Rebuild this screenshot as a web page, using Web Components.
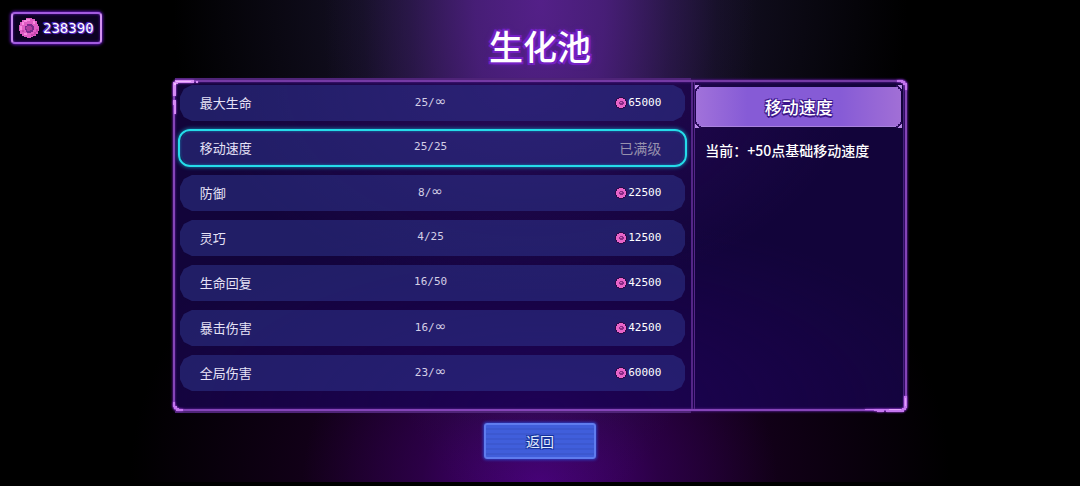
<!DOCTYPE html>
<html lang="zh-CN">
<head>
    <meta charset="UTF-8">
    <meta name="viewport" content="width=device-width, initial-scale=1.0">
    <title>生化池</title>
    <style>
        body {
            margin: 0;
            background: #000;
            color: #fff;
            font-family: "Noto Sans CJK SC", sans-serif;
        }
    </style>
</head>
<body>
    <bio-pool>
        <coin-badge slot="coins">238390</coin-badge>
        <span slot="title">生化池</span>
        <upgrade-row slot="rows" name="最大生命" level="25/∞" price="65000"></upgrade-row>
        <upgrade-row slot="rows" name="移动速度" level="25/25" selected></upgrade-row>
        <upgrade-row slot="rows" name="防御" level="8/∞" price="22500"></upgrade-row>
        <upgrade-row slot="rows" name="灵巧" level="4/25" price="12500"></upgrade-row>
        <upgrade-row slot="rows" name="生命回复" level="16/50" price="42500"></upgrade-row>
        <upgrade-row slot="rows" name="暴击伤害" level="16/∞" price="42500"></upgrade-row>
        <upgrade-row slot="rows" name="全局伤害" level="23/∞" price="60000"></upgrade-row>
        <upgrade-detail slot="detail">
            <span slot="title">移动速度</span>
            当前：+50点基础移动速度
        </upgrade-detail>
        <back-button slot="action">返回</back-button>
    </bio-pool>

    <script>
        // Shared helper: attach an open root and fill it from a template
        function attach(element, html) {
            const template = document.createElement('template');
            template.innerHTML = html;
            element.attachShadow({ mode: 'open' }).appendChild(template.content.cloneNode(true));
        }

        class CoinIcon extends HTMLElement {
            constructor() {
                super();
                attach(this, `
                    <style>
                        :host { display: block; width: 20px; height: 20px; }
                        svg { display: block; width: 100%; height: 100%; }
                        .small, :host([small]) .large { display: none; }
                        :host([small]) .small { display: block; }
                        :host([small]) { width: 12px; height: 12px; }
                    </style>
                    <svg class="large" viewBox="0 0 20 20" aria-hidden="true">
                        <path fill="#e05cc4" d="M7 0h6v1h3v2h2v3h1v2h1v5h-1v3h-2v2h-3v1h-2v1H8v-1H5v-1H3v-2H1v-3H0V7h1V4h2V2h4z"/>
                        <path fill="#f88ade" d="M7 1h4v2H8v1H5v3H3v5H1V8h2V4h2V2h2zM14 3h2v3h-2zM5 15h3v2H5z"/>
                        <path fill="#c845ad" d="M12 16h3v-2h2v-3h2v3h-2v3h-3v1h-2zM3 12h2v2H3z"/>
                        <path fill="#7c2a8c" d="M8 6h5v1h1v1h1v4h-1v2h-2v1H8v-1H7v-2H6V8h2z"/>
                        <path fill="#b13c9f" d="M8 8h4v1h1v3h-2v1H8v-2H7V9h1z"/>
                    </svg>
                    <svg class="small" viewBox="0 0 12 12" aria-hidden="true">
                        <path fill="#2b0a48" d="M4 0h4v1h2v1h1v2h1v4h-1v2h-1v1H8v1H4v-1H2v-1H1V8H0V4h1V2h1V1h2z"/>
                        <path fill="#e764c8" d="M4 1h4v1h2v2h1v4h-1v2H8v1H4v-1H2V8H1V4h1V2h2z"/>
                        <path fill="#8a2a86" d="M5 4h3v1h1v2H8v1H5V7H4V5h1z"/>
                        <path fill="#d060bd" d="M5 5h2v1H5z"/>
                    </svg>
                `);
            }
        }

        class CoinBadge extends HTMLElement {
            constructor() {
                super();
                attach(this, `
                    <style>
                        :host {
                            display: inline-flex;
                            align-items: center;
                            gap: 4px;
                            box-sizing: border-box;
                            height: 32px;
                            padding: 0 6px;
                            border: 2px solid #a35be0;
                            border-left-color: #c98aee;
                            border-right-color: #d292f0;
                            border-radius: 4px;
                            background: #0c0222;
                            box-shadow: 0 0 3px 1px #5c12b0, inset 0 0 3px #5c12b0;
                            font: 14px/20px "DejaVu Sans Mono", monospace;
                            text-shadow: 1px 1px #5d2fd0, -1px -1px #5d2fd0, 0 0 3px #5d2fd0;
                        }
                    </style>
                    <coin-icon></coin-icon>
                    <span><slot></slot></span>
                `);
            }
        }

        class UpgradeRow extends HTMLElement {
            constructor() {
                super();
                attach(this, `
                    <style>
                        :host { display: block; position: relative; }
                        button {
                            display: grid;
                            grid-template-columns: 1fr auto 1fr;
                            align-items: center;
                            width: 100%;
                            height: 36px;
                            padding: 0 24px 0 20px;
                            border: 0;
                            background: rgba(47, 55, 145, .5);
                            clip-path: polygon(0 12px, 4px 4px, 12px 0, calc(100% - 12px) 0, calc(100% - 4px) 4px, 100% 12px, 100% calc(100% - 12px), calc(100% - 4px) calc(100% - 4px), calc(100% - 12px) 100%, 12px 100%, 4px calc(100% - 4px), 0 calc(100% - 12px));
                            color: #e6e2f6;
                            font: 13px/20px "Noto Sans CJK SC", sans-serif;
                            text-align: left;
                            cursor: pointer;
                        }
                        :host([selected])::after {
                            content: "";
                            position: absolute;
                            inset: -1px -2px;
                            border: 2px solid #25dcea;
                            border-radius: 12px;
                            box-shadow: 0 0 4px #148fb8, inset 0 0 3px #147ba8;
                            pointer-events: none;
                        }
                        .level {
                            padding-bottom: 2px;
                            color: #d4cfe6;
                            font: 11px/16px "DejaVu Sans Mono", monospace;
                        }
                        .endless { font: 14px/16px "DejaVu Sans", sans-serif; }
                        .price {
                            display: flex;
                            align-items: center;
                            justify-content: flex-end;
                            gap: 1px;
                            font: 11px/16px "DejaVu Sans Mono", monospace;
                            color: #fff;
                        }
                        .full {
                            color: #9791ad;
                            font: 14px/20px "Noto Sans CJK SC", sans-serif;
                        }
                    </style>
                    <button type="button">
                        <span class="name"></span>
                        <span class="level"></span>
                        <span class="price"></span>
                    </button>
                `);
            }

            static get observedAttributes() {
                return ['name', 'level', 'price', 'selected'];
            }

            attributeChangedCallback() {
                this.render();
            }

            connectedCallback() {
                this.render();
            }

            // A row without a price has reached its top level
            render() {
                const level = this.getAttribute('level') || '';
                const price = this.getAttribute('price');
                this.shadowRoot.querySelector('.name').textContent = this.getAttribute('name');
                this.shadowRoot.querySelector('.level').innerHTML = level.replace('∞', '<span class="endless">∞</span>');
                this.shadowRoot.querySelector('button').setAttribute('aria-pressed', this.hasAttribute('selected'));
                this.shadowRoot.querySelector('.price').innerHTML = price
                    ? `<coin-icon small></coin-icon><span>${price}</span>`
                    : '<span class="full">已满级</span>';
            }
        }

        class UpgradeDetail extends HTMLElement {
            constructor() {
                super();
                attach(this, `
                    <style>
                        :host { display: block; font-size: 14px; line-height: 20px; }
                        h2 {
                            position: relative;
                            margin: 0;
                            padding: 8px 0;
                            background: linear-gradient(90deg, #a172da, #865bd6 25%, #865bd6 70%, #a16fd6);
                            border-bottom: 1px solid #a982df;
                            font-size: 17px;
                            font-weight: 500;
                            line-height: 23px;
                            text-align: center;
                            text-shadow: 1px 1px #3b168b, -1px -1px #3b168b, 1px -1px #3b168b, -1px 1px #3b168b, 0 2px #3b168b;
                        }
                        svg { position: absolute; width: 6px; height: 6px; }
                        .tl { top: -2px; left: -1px; }
                        .tr { top: -2px; right: -1px; transform: scaleX(-1); }
                        .bl { bottom: -2px; left: -1px; transform: scaleY(-1); }
                        .br { bottom: -2px; right: -1px; transform: scale(-1); }
                        p { margin: 0; padding: 13px 9px; font-weight: 500; }
                    </style>
                    <h2>
                        <slot name="title"></slot>
                        ${['tl', 'tr', 'bl', 'br'].map(corner => `
                        <svg class="${corner}" viewBox="0 0 6 6" shape-rendering="crispEdges" aria-hidden="true">
                            <path fill="#2a0c5c" d="M0 0h6v2H4v2H2v2H0z"/>
                            <path fill="#b88be8" d="M0 0h4v1H3v1H2v1H1v1H0z"/>
                        </svg>`).join('')}
                    </h2>
                    <p><slot></slot></p>
                `);
            }
        }

        class BackButton extends HTMLElement {
            constructor() {
                super();
                attach(this, `
                    <style>
                        :host { display: block; }
                        button {
                            display: block;
                            width: 112px;
                            height: 36px;
                            padding: 0;
                            border: 2px solid #5f7cee;
                            border-radius: 3px;
                            background: repeating-linear-gradient(#405edb 0 3px, #3c58d0 3px 5px);
                            box-shadow: 0 0 3px 1px #2b3fc0;
                            color: #e2ecff;
                            font: 14px/20px "Noto Sans CJK SC", sans-serif;
                            text-shadow: 1px 1px #16339c, -1px -1px #16339c, 1px -1px #16339c, -1px 1px #16339c;
                            cursor: pointer;
                        }
                    </style>
                    <button type="button"><slot></slot></button>
                `);
            }
        }

        class BioPool extends HTMLElement {
            constructor() {
                super();
                attach(this, `
                    <style>
                        :host {
                            display: flex;
                            flex-direction: column;
                            box-sizing: border-box;
                            min-height: 100vh;
                            border-bottom: 4px solid #000;
                            background:
                                radial-gradient(ellipse 20% 110% at 50% 0, rgba(86, 32, 140, .95), rgba(78, 31, 130, .85) 30%, rgba(60, 28, 104, .5) 60%, rgba(44, 24, 78, .2) 82%, transparent),
                                radial-gradient(ellipse 34% 90% at 50% 0, rgba(40, 30, 68, .9), rgba(30, 24, 54, .6) 50%, transparent),
                                radial-gradient(ellipse 22% 42% at 50% 100%, rgba(76, 0, 130, .9), rgba(60, 0, 104, .45) 50%, transparent),
                                radial-gradient(ellipse 38% 70% at 50% 100%, rgba(48, 0, 72, .85), rgba(34, 0, 46, .6) 50%, transparent),
                                #000;
                        }
                        header {
                            display: grid;
                            grid-template-columns: 1fr auto 1fr;
                            align-items: start;
                            height: 80px;
                            padding: 0 11px;
                        }
                        .coins { padding-top: 12px; }
                        h1 {
                            margin: 0;
                            padding-top: 22px;
                            font-size: 34px;
                            font-weight: 500;
                            line-height: 48px;
                            text-shadow: 2px 2px #7420c4, -2px 2px #7420c4, 2px -2px #7420c4, -2px -2px #7420c4, 0 0 6px #7d22d0;
                        }
                        main {
                            position: relative;
                            display: grid;
                            grid-template-columns: 71fr 29fr;
                            box-sizing: border-box;
                            width: 68%;
                            margin: 0 auto;
                            border: 2px solid #8544b8;
                            border-top-color: #753aa5;
                            border-radius: 5px;
                            box-shadow: 0 0 2px 1px #42136f, inset 0 0 2px 1px #3c1270;
                            background:
                                radial-gradient(ellipse 45% 65% at 48% 0, rgba(65, 15, 125, .45), transparent),
                                radial-gradient(ellipse 60% 60% at 50% 100%, rgba(42, 0, 112, .5), transparent),
                                #12043a;
                        }
                        .list {
                            position: relative;
                            display: flex;
                            flex-direction: column;
                            gap: 9px;
                            padding: 3px 6px 18px 5px;
                            border-right: 2px solid #542687;
                        }
                        /* dim outer line above and below the list */
                        .list::before {
                            content: "";
                            position: absolute;
                            inset: -4px 0;
                            border: solid #4f2478;
                            border-width: 2px 0;
                            pointer-events: none;
                        }
                        .detail {
                            margin: 0 1px;
                            padding: 5px 2px 0 1px;
                            border-right: 1px solid #46217c;
                            border-left: 1px solid #542687;
                        }
                        .corner { position: absolute; filter: drop-shadow(0 0 1px #a742e0); }
                        .nw { top: -3px; left: -3px; }
                        .ne { top: -2px; right: -2px; }
                        .sw { bottom: -2px; left: -2px; }
                        .se { bottom: -4px; right: -2px; }
                        footer { display: flex; justify-content: center; padding: 12px 0 20px; }
                    </style>
                    <header>
                        <div class="coins"><slot name="coins"></slot></div>
                        <h1><slot name="title"></slot></h1>
                    </header>
                    <main>
                        <div class="list"><slot name="rows"></slot></div>
                        <div class="detail"><slot name="detail"></slot></div>
                        <svg class="corner nw" width="28" height="36" shape-rendering="crispEdges" aria-hidden="true">
                            <path fill="#d78bf5" d="M3 1h19v3H6v1H4v12H1V3h2zM24 2h2v2h-2zM1 21h3v14H2v-9H1z"/>
                            <path fill="#f0b8ff" d="M4 2h15v1H4v3H2V4h2z"/>
                        </svg>
                        <svg class="corner ne" width="10" height="10" shape-rendering="crispEdges" aria-hidden="true">
                            <path fill="#c476ee" d="M0 0h6v1h2v2h2v7H8V5H6V3H4V2H0z"/>
                        </svg>
                        <svg class="corner sw" width="10" height="10" shape-rendering="crispEdges" aria-hidden="true">
                            <path fill="#c476ee" d="M0 1h2v4h2v2h2v1h4v2H3V8H1V6H0z"/>
                        </svg>
                        <svg class="corner se" width="46" height="18" shape-rendering="crispEdges" aria-hidden="true">
                            <path fill="#c476ee" d="M43 1h3v12h-1v2h-2v2H25v-2h-2v2h-7v-1h-3v-1H4v-1h37v-1h2z"/>
                            <path fill="#e2a0fa" d="M28 14h12v1H28zM44 3h1v8h-1z"/>
                        </svg>
                    </main>
                    <footer><slot name="action"></slot></footer>
                `);
            }
        }

        customElements.define('coin-icon', CoinIcon);
        customElements.define('coin-badge', CoinBadge);
        customElements.define('upgrade-row', UpgradeRow);
        customElements.define('upgrade-detail', UpgradeDetail);
        customElements.define('back-button', BackButton);
        customElements.define('bio-pool', BioPool);
    </script>
</body>
</html>
